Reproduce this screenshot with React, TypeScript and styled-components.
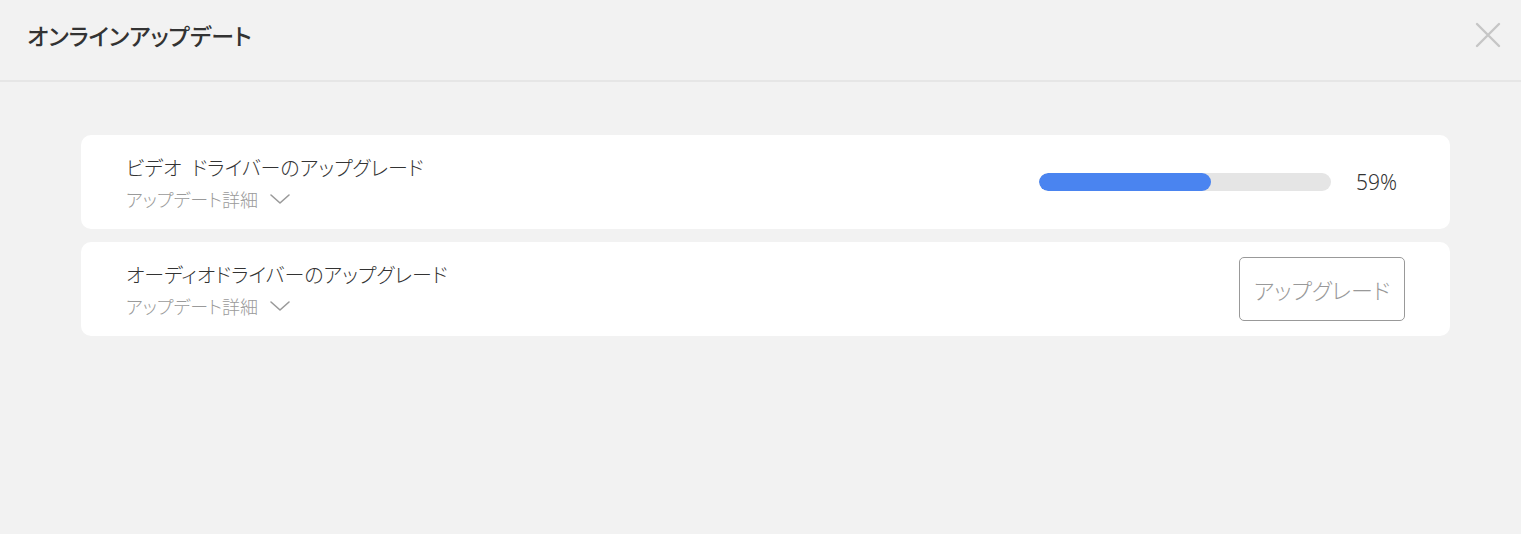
import React from 'react';
import styled, { createGlobalStyle } from 'styled-components';

const GlobalStyle = createGlobalStyle`
  html, body {
    margin: 0;
    padding: 0;
    background: #f2f2f2;
  }
  body {
    font-family: 'Noto Sans CJK JP', 'Noto Sans', sans-serif;
    font-feature-settings: 'palt';
    color: #333;
  }
`;

type Item = {
  title: string;
  progress?: number;
};

const items: Item[] = [
  { title: 'ビデオ\u2002ドライバーのアップグレード', progress: 59 },
  { title: 'オーディオドライバーのアップグレード' },
];

const ChevronDown = () => (
  <svg width="22" height="14" viewBox="0 0 22 14" fill="none">
    <path d="M2 3 L11 11 L20 3" stroke="#9a9a9a" strokeWidth="1.6" strokeLinecap="round" strokeLinejoin="round" />
  </svg>
);

const CloseIcon = () => (
  <svg width="26" height="26" viewBox="0 0 26 26" fill="none">
    <path d="M2 2 L24 24 M24 2 L2 24" stroke="#c6c6c6" strokeWidth="2.4" strokeLinecap="round" />
  </svg>
);

const App = () => {
  return (
    <Page>
      <GlobalStyle />
      <Header>
        <Title>オンラインアップデート</Title>
        <CloseBtn aria-label="close">
          <CloseIcon />
        </CloseBtn>
      </Header>
      <List>
        {items.map((item) => (
          <Card key={item.title}>
            <Info>
              <ItemTitle>{item.title}</ItemTitle>
              <Details>
                <span>アップデート詳細</span>
                <ChevronDown />
              </Details>
            </Info>
            {item.progress !== undefined ? (
              <ProgressWrap>
                <Track>
                  <Fill style={{ width: `${item.progress}%` }} />
                </Track>
                <Percent>{item.progress}%</Percent>
              </ProgressWrap>
            ) : (
              <UpgradeBtn>アップグレード</UpgradeBtn>
            )}
          </Card>
        ))}
      </List>
    </Page>
  );
};

export default App;

const Page = styled.div`
  width: 1521px;
  height: 534px;

  background: #f2f2f2;
`;

const Header = styled.div`
  height: 80px;

  display: flex;
  align-items: center;
  justify-content: space-between;

  padding: 0 20px 0 27px;

  border-bottom: 2px solid #e6e6e6;
`;

const Title = styled.h1`
  margin: 0 0 10px;

  font-size: 23px;
  font-weight: 500;
  color: #333;
`;

const CloseBtn = styled.button`
  display: flex;
  padding: 0;
  margin-bottom: 10px;

  border: none;
  background: transparent;
  cursor: pointer;
`;

const List = styled.div`
  display: flex;
  flex-direction: column;
  gap: 13px;

  padding: 53px 71px 0 81px;
`;

const Card = styled.div`
  height: 94px;

  display: flex;
  align-items: center;
  justify-content: space-between;

  padding: 0 45px 0 45px;
  box-sizing: border-box;

  border-radius: 10px;
  background: #fff;
`;

const Info = styled.div`
  display: flex;
  flex-direction: column;
  gap: 3px;
`;

const ItemTitle = styled.div`
  font-size: 20px;
  font-weight: 300;
  line-height: 30px;
  color: #333;
`;

const Details = styled.div`
  display: flex;
  align-items: center;
  gap: 11px;

  font-size: 18px;
  font-weight: 300;
  line-height: 26px;
  color: #9a9a9a;
`;

const ProgressWrap = styled.div`
  display: flex;
  align-items: center;
  gap: 25px;

  margin-right: 8px;
`;

const Track = styled.div`
  width: 292px;
  height: 18px;

  border-radius: 9px;
  background: #e5e5e5;
  overflow: hidden;
`;

const Fill = styled.div`
  height: 100%;

  border-radius: 9px;
  background: #4a84f0;
`;

const Percent = styled.span`
  font-family: 'Noto Sans', sans-serif;
  font-size: 21px;
  font-weight: 300;
  color: #333;
`;

const UpgradeBtn = styled.button`
  width: 166px;
  height: 64px;

  border: 1px solid #999;
  border-radius: 5px;
  background: #fff;

  font-family: 'Noto Sans CJK JP', sans-serif;
  font-feature-settings: 'palt';
  font-size: 22px;
  font-weight: 300;
  color: #999;
  cursor: pointer;
`;
